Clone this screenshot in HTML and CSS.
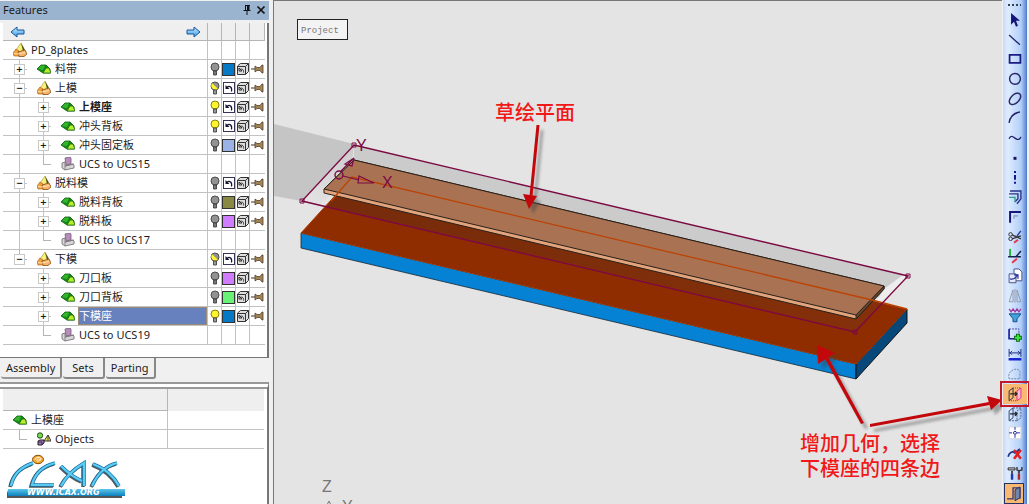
FILE: index.html
```html
<!DOCTYPE html>
<html lang="zh-CN">
<head>
<meta charset="utf-8">
<title>PD_8plates</title>
<link rel="stylesheet" href="styles.css">
</head>
<body>
<svg class="defs" aria-hidden="true">
  <symbol id="asm" viewBox="0 0 14 14"><path d="M3 7L8 0l3 6-4 3z" fill="#f8f078" stroke="#8a7a20" stroke-width=".5"/><path d="M8 0l4 7-2 1z" fill="#4f5216"/><path d="M0 10l3-4 3 2 2 5H1z" fill="#f2a13c" stroke="#b0641a" stroke-width=".7"/><path d="M5 9l7-2 2 4-3 2.500H6z" fill="#f6b568" stroke="#8a4a10" stroke-width=".8"/><path d="M1 10.500l4 .5 7-1.500" fill="none" stroke="#ffe3b0"/></symbol>
  <symbol id="part" viewBox="0 0 14 14"><path d="M0 7l4-4h5l4 4v4H6z" fill="#128a16" stroke="#0a5a0c" stroke-width=".8"/><path d="M1 7l3-3.500h4L6 8z" fill="#35b52c"/><path d="M6 11l3-5h3l2 5z" fill="#b6f02c" stroke="#1d6a10" stroke-width=".8"/></symbol>
  <symbol id="ucs" viewBox="0 0 14 14"><path d="M4 1l5-1 1 1v6l-5 1z" fill="#b58fb8" stroke="#76587c" stroke-width=".8"/><path d="M1 6l3-1v4l8-2 1 1v3l-9 2-3-2z" fill="#d9d5da" stroke="#777" stroke-width=".9"/><path d="M4 9v4M4 9l9-2" stroke="#777" stroke-width=".8"/></symbol>
  <symbol id="objs" viewBox="0 0 14 14"><circle cx="3" cy="3.500" r="2.700" fill="#78d94c" stroke="#234d1c"/><path d="M7 9l4-6 3 6z" fill="#eadf55" stroke="#333"/><path d="M11 3v6" stroke="#333" stroke-width=".8"/><path d="M1 9l2-1h4v3l-2 2H1z" fill="#a974c4" stroke="#222"/><path d="M1 10h4v3" fill="none" stroke="#222" stroke-width=".8"/></symbol>
  <symbol id="off" viewBox="0 0 14 14"><circle cx="7" cy="5" r="4" fill="#929292" stroke="#4d4d4d"/><path d="M5.500 9v4h3V9z" fill="#777" stroke="#333" stroke-width=".8"/></symbol>
  <symbol id="on" viewBox="0 0 14 14"><circle cx="7" cy="5" r="4" fill="#fff52b" stroke="#8a8115"/><path d="M5.500 9v4h3V9z" fill="#9a9a9a" stroke="#333" stroke-width=".8"/></symbol>
  <symbol id="half" viewBox="0 0 14 14"><circle cx="7" cy="5" r="4" fill="#929292" stroke="#4d4d4d"/><path d="M4.200 2.200l5.600 5.600A4 4 0 0 1 4.200 2.200" fill="#fff52b"/><path d="M5.500 9v4h3V9z" fill="#9a9a9a" stroke="#333" stroke-width=".8"/></symbol>
  <symbol id="inh" viewBox="0 0 14 14"><rect x="1.500" y="1.500" width="11" height="11" fill="#fff" stroke="#383456"/><path d="M3.500 4v4h4z" fill="#151532"/><path d="M5 6.500c2-2 5.500-1 4.500 4" fill="none" stroke="#151532" stroke-width="1.200"/></symbol>
  <symbol id="box" viewBox="0 0 14 14"><path d="M1.500 4l3-2.500h8v8l-3 3h-8z" fill="#ddd" stroke="#333"/><path d="M1.500 4.500h8v8M9.500 4.500l3-3" fill="none" stroke="#333"/><path d="M3 6v3h3zM4 7.500c2-1 4 0 3.500 3" fill="none" stroke="#222" stroke-width=".9"/></symbol>
  <symbol id="tack" viewBox="0 0 14 14"><path d="M1 7h5" stroke="#3b3024"/><path d="M5 4l2 1.500h3L12 3h1v8h-1l-2-2.500H7L5 10z" fill="#a18358" stroke="#584027" stroke-width=".8"/></symbol>
  <linearGradient id="blue" x2="0" y2="1"><stop stop-color="#c5ecff"/><stop offset="1" stop-color="#3b9ae8"/></linearGradient>
</svg>
<main class="app">
  <aside class="side">
    <header class="title"><h1>Features</h1>
      <button class="plain" aria-label="Pin"><svg width="12" height="12"><path d="M4 1.500h5M4.500 1.500v5M8 1.500v5M2.500 6.500h7M6 7v4" fill="none" stroke="#111"/><path d="M7 1v6" stroke="#111" stroke-width="2"/></svg></button>
      <button class="plain" aria-label="Close"><svg width="12" height="12"><path d="M2.500 2.500l7 7m0-7l-7 7" stroke="#111" stroke-width="1.700"/></svg></button>
    </header>
    <section class="tree">
      <table>
        <colgroup><col><col class="c"><col class="c"><col class="c"><col class="c"></colgroup>
        <thead><tr><th><div class="nav"><button class="plain" aria-label="Back"><svg width="15" height="12"><path d="M1 6l6-5v3h7v4H7v3z" fill="url(#blue)" stroke="#16549c"/></svg></button><button class="plain" aria-label="Forward"><svg width="15" height="12"><path d="M14 6L8 1v3H1v4h7v3z" fill="url(#blue)" stroke="#16549c"/></svg></button></div></th><th></th><th></th><th></th><th></th></tr></thead>
        <tbody>
        <tr><td><div class="row"><svg><use href="#asm"/></svg><span>PD_8plates</span></div></td><td></td><td></td><td></td><td></td></tr>
        <tr><td><div class="row"><i class="g v"><button aria-label="Expand">+</button></i><svg><use href="#part"/></svg><span>料带</span></div></td><td><svg><use href="#off"/></svg></td><td><b class="sw blue"></b></td><td><svg><use href="#box"/></svg></td><td><svg><use href="#tack"/></svg></td></tr>
        <tr><td><div class="row"><i class="g v"><button aria-label="Collapse">−</button></i><svg><use href="#asm"/></svg><span>上模</span></div></td><td><svg><use href="#half"/></svg></td><td><svg><use href="#inh"/></svg></td><td><svg><use href="#box"/></svg></td><td><svg><use href="#tack"/></svg></td></tr>
        <tr><td><div class="row"><i class="g pass"></i><i class="g v"><button aria-label="Expand">+</button></i><svg><use href="#part"/></svg><span class="bold">上模座</span></div></td><td><svg><use href="#on"/></svg></td><td><svg><use href="#inh"/></svg></td><td><svg><use href="#box"/></svg></td><td><svg><use href="#tack"/></svg></td></tr>
        <tr><td><div class="row"><i class="g pass"></i><i class="g v"><button aria-label="Expand">+</button></i><svg><use href="#part"/></svg><span>冲头背板</span></div></td><td><svg><use href="#on"/></svg></td><td><svg><use href="#inh"/></svg></td><td><svg><use href="#box"/></svg></td><td><svg><use href="#tack"/></svg></td></tr>
        <tr><td><div class="row"><i class="g pass"></i><i class="g v"><button aria-label="Expand">+</button></i><svg><use href="#part"/></svg><span>冲头固定板</span></div></td><td><svg><use href="#off"/></svg></td><td><b class="sw pale"></b></td><td><svg><use href="#box"/></svg></td><td><svg><use href="#tack"/></svg></td></tr>
        <tr><td><div class="row"><i class="g pass"></i><i class="g end"></i><svg><use href="#ucs"/></svg><span>UCS to UCS15</span></div></td><td></td><td></td><td></td><td></td></tr>
        <tr><td><div class="row"><i class="g v"><button aria-label="Collapse">−</button></i><svg><use href="#asm"/></svg><span>脱料模</span></div></td><td><svg><use href="#off"/></svg></td><td><svg><use href="#inh"/></svg></td><td><svg><use href="#box"/></svg></td><td><svg><use href="#tack"/></svg></td></tr>
        <tr><td><div class="row"><i class="g pass"></i><i class="g v"><button aria-label="Expand">+</button></i><svg><use href="#part"/></svg><span>脱料背板</span></div></td><td><svg><use href="#off"/></svg></td><td><b class="sw olive"></b></td><td><svg><use href="#box"/></svg></td><td><svg><use href="#tack"/></svg></td></tr>
        <tr><td><div class="row"><i class="g pass"></i><i class="g v"><button aria-label="Expand">+</button></i><svg><use href="#part"/></svg><span>脱料板</span></div></td><td><svg><use href="#off"/></svg></td><td><b class="sw violet"></b></td><td><svg><use href="#box"/></svg></td><td><svg><use href="#tack"/></svg></td></tr>
        <tr><td><div class="row"><i class="g pass"></i><i class="g end"></i><svg><use href="#ucs"/></svg><span>UCS to UCS17</span></div></td><td></td><td></td><td></td><td></td></tr>
        <tr><td><div class="row"><i class="g end"><button aria-label="Collapse">−</button></i><svg><use href="#asm"/></svg><span>下模</span></div></td><td><svg><use href="#half"/></svg></td><td><svg><use href="#inh"/></svg></td><td><svg><use href="#box"/></svg></td><td><svg><use href="#tack"/></svg></td></tr>
        <tr><td><div class="row"><i class="g"></i><i class="g v"><button aria-label="Expand">+</button></i><svg><use href="#part"/></svg><span>刀口板</span></div></td><td><svg><use href="#off"/></svg></td><td><b class="sw violet"></b></td><td><svg><use href="#box"/></svg></td><td><svg><use href="#tack"/></svg></td></tr>
        <tr><td><div class="row"><i class="g"></i><i class="g v"><button aria-label="Expand">+</button></i><svg><use href="#part"/></svg><span>刀口背板</span></div></td><td><svg><use href="#off"/></svg></td><td><b class="sw green"></b></td><td><svg><use href="#box"/></svg></td><td><svg><use href="#tack"/></svg></td></tr>
        <tr><td><div class="row"><i class="g"></i><i class="g v"><button aria-label="Expand">+</button></i><svg><use href="#part"/></svg><span class="sel">下模座</span></div></td><td><svg><use href="#on"/></svg></td><td><b class="sw blue"></b></td><td><svg><use href="#box"/></svg></td><td><svg><use href="#tack"/></svg></td></tr>
        <tr><td><div class="row"><i class="g"></i><i class="g end"></i><svg><use href="#ucs"/></svg><span>UCS to UCS19</span></div></td><td></td><td></td><td></td><td></td></tr>
        </tbody>
      </table>
    </section>
    <nav class="tabs"><button class="active">Assembly</button><button>Sets</button><button>Parting</button></nav>
    <section class="detail">
      <table>
        <colgroup><col class="name"><col></colgroup>
        <thead><tr><th></th><th></th></tr></thead>
        <tbody>
        <tr><td><div class="row"><svg><use href="#part"/></svg><span>上模座</span></div></td><td></td></tr>
        <tr><td><div class="row"><i class="g end"></i><svg><use href="#objs"/></svg><span>Objects</span></div></td><td></td></tr>
        </tbody>
      </table>
      <svg class="logo" width="122" height="48" viewBox="5 451 122 48">
        <defs><g id="mark" fill="none"><path d="M11 486C13 475 21 467 33 463"/><path d="M55 463C43 466 35 473 32 485h22"/><path d="M61 486C65 478 74 469 84 463v23M61 466c8 8 14 12 21 15"/><path d="M93 464c11 4 20 11 26 22M117 463c-12 3-20 12-25 23"/></g>
        <linearGradient id="bar" x2="0" y2="1"><stop stop-color="#5cc5ea"/><stop offset="1" stop-color="#0b7fbd"/></linearGradient></defs>
        <g transform="translate(-1 1)"><use href="#mark" stroke="#555" stroke-width="3.500"/></g>
        <use href="#mark" stroke="#1674a8" stroke-width="3.600"/><use href="#mark" stroke="#5ccbf2" stroke-width="2.200"/>
        <ellipse cx="38" cy="459.500" rx="5.500" ry="4.200" fill="#f3a52c" stroke="#8a5010"/><path d="M35 460c0-3 6-4 6-1 0 2-5 3-4 1 1-2 3-1 3 0" fill="none" stroke="#fff" stroke-width=".9"/>
        <path d="M7 490v8h115v-2H9z" fill="#555"/><path d="M8 489h117v7H8z" fill="url(#bar)"/>
        <text x="27" y="495" class="url">WWW.ICAX.ORG</text>
      </svg>
    </section>
  </aside>
  <div class="split"></div>
  <section class="view">
    <svg class="scene" viewBox="274 0 728 504" preserveAspectRatio="xMinYMin meet">
      <defs>
        <linearGradient id="pl" x1="302" y1="200" x2="354" y2="145" gradientUnits="userSpaceOnUse"><stop stop-color="#e4e4e4"/><stop offset="1" stop-color="#cbcbcb"/></linearGradient>
        <linearGradient id="sh" x1="300" x2="856" gradientUnits="userSpaceOnUse"><stop stop-color="#762b0a"/><stop offset="1" stop-color="#84300a"/></linearGradient>
        <filter id="soft" x="-30%" y="-30%" width="160%" height="160%"><feGaussianBlur stdDeviation="1.500"/></filter>
        <g id="arrows"><path d="M536.500 125h3l-7 71h-3z"/><path d="M523 194l14 2-8 13z"/><path d="M864 423l-3 1-37-67 3-2z"/><path d="M817 345l18 8-17 11z"/><path d="M870 427v-3l119-22 1 3z"/><path d="M1002 400l-15-4 4 14z"/></g>
      </defs>
      <path d="M274 124l80 20-52 57-28-5z" fill="#c5c5c5"/>
      <path d="M354 145L302 201 318 205 338 190 352 164z" fill="url(#pl)"/>
      <path d="M354 145L903 275 880 298 354 170z" fill="#cbcbcb"/>
      <path d="M903 275l5 1-36 38-2-2 14-23z" fill="#ededed"/>
      <path d="M301 233L352 177 907 309 856 364z" fill="#8f2c00"/>
      <path d="M327 206L352 177 880 303 857 331z" fill="url(#sh)"/>
      <path d="M301 233L856 364V379L301 248z" fill="#0582d4" stroke="#102536" stroke-width=".8"/>
      <path d="M856 364L907 309V323L856 379z" fill="#07477a" stroke="#111"/>
      <path d="M352 177L301 233 856 364 907 309" fill="none" stroke="#b33c00"/>
      <path d="M354 160L324 189V193L856 319 884 289V286z" fill="#e2a47c" stroke="#29201a"/>
      <path d="M856 315L884 286V289L856 319z" fill="#69462e" stroke="#29201a"/>
      <path d="M354 160L324 189 856 315 884 286z" fill="#a97353" stroke="#29201a"/>
      <path d="M331 201L352 177 872 300 907 309" fill="none" stroke="#bc4305" stroke-width="1.300"/>
      <g fill="none" stroke="#7b0a43" stroke-width="1.400"><path d="M354 145L908 276 855 332 302 201z"/><path d="M352 143h4v4h-4zM906 274h4v4h-4zM853 330h4v4h-4zM300 199h4v4h-4z" stroke-width="1"/><circle cx="339" cy="175" r="4"/><path d="M343 176l16 4M359 176l15 7h-16zM341 171l13-13-9 6 7 2 2-8" stroke-width="1.200"/></g>
      <text x="382" y="188" class="axis">X</text><text x="356" y="151" class="axis">Y</text>
      <text x="322" y="492" class="axis dim">Z</text><text x="342" y="512" class="axis dim">Y</text><path d="M326 507l3-6 3 6z" fill="none" stroke="#777"/>
      <g class="label"><rect x="297.500" y="19.500" width="50" height="20"/><text x="301" y="33">Project</text></g>
      <g transform="translate(4 5)" opacity=".45" filter="url(#soft)"><use href="#arrows" fill="#444"/></g>
      <use href="#arrows" fill="#c3080c"/>
      <g class="note"><text x="495" y="120">草绘平面</text><text><tspan x="800" y="451">增加几何，选择</tspan><tspan x="800" y="476">下模座的四条边</tspan></text></g>
    </svg>
  </section>
  <nav class="tools" aria-label="Sketch tools">
    <div class="grip"></div>
    <button aria-label="Select"><svg viewBox="0 0 24 20"><path d="M8 3v12l3-3 2 5 2-1-2-5h4z" fill="#15157c"/></svg></button>
    <button aria-label="Line"><svg viewBox="0 0 24 20"><path d="M6 5l11 10" stroke="#22226e" stroke-width="1.300"/></svg></button>
    <button aria-label="Rectangle"><svg viewBox="0 0 24 20"><path d="M6.500 6h11v8h-11z" fill="none" stroke="#1b1b86" stroke-width="1.800"/></svg></button>
    <button aria-label="Circle"><svg viewBox="0 0 24 20"><circle cx="12" cy="10" r="5.500" fill="none" stroke="#29296c" stroke-width="1.500"/></svg></button>
    <button aria-label="Ellipse"><svg viewBox="0 0 24 20"><ellipse cx="12" cy="10" rx="7" ry="4.200" transform="rotate(-45 12 10)" fill="none" stroke="#29296c" stroke-width="1.500"/></svg></button>
    <button aria-label="Arc"><svg viewBox="0 0 24 20"><path d="M6 15C7 9 11 5 17 4" fill="none" stroke="#22226e" stroke-width="1.500"/></svg></button>
    <button aria-label="Spline"><svg viewBox="0 0 24 20"><path d="M6 11c2-5 5-1 7 0s4 1 5-2" fill="none" stroke="#22226e" stroke-width="1.400"/></svg></button>
    <button aria-label="Point"><svg viewBox="0 0 24 20"><path d="M10.500 9h3v3h-3z" fill="#15155e"/></svg></button>
    <button aria-label="Centre line"><svg viewBox="0 0 24 20"><path d="M12 3v14" stroke="#15158c" stroke-width="2" stroke-dasharray="2 2 5 2"/></svg></button>
    <button aria-label="Offset"><svg viewBox="0 0 24 20"><path d="M7 4h11v8l-4 5M6 7h9v5l-3 3" fill="none" stroke="#293389" stroke-width="1.400"/><path d="M6 10.500h6v5" fill="none" stroke="#2c9b8e" stroke-width="1.300"/></svg></button>
    <button aria-label="Corner"><svg viewBox="0 0 24 20"><path d="M7 16V5h11" fill="none" stroke="#15157a" stroke-width="2"/><path d="M11 12V9h4" fill="none" stroke="#8795ba" stroke-width="1.300"/></svg></button>
    <button aria-label="Trim"><svg viewBox="0 0 24 20"><g fill="none" stroke="#333"><circle cx="7.500" cy="7.500" r="1.800"/><circle cx="7.500" cy="12" r="1.800"/><path d="M9 8l9 4M9 12l9-3" stroke-width="1.300"/></g><path d="M14 9l4-5" stroke="#2333a8" stroke-width="1.400"/><path d="M11 16l4-3" stroke="#e93347" stroke-width="2"/></svg></button>
    <button aria-label="Extend"><svg viewBox="0 0 24 20"><path d="M7 3v8" stroke="#23b63c" stroke-width="2"/><path d="M5 11h13M13 11l5-6" stroke="#172248" stroke-width="1.500"/><path d="M9 17l5-4" stroke="#e93347" stroke-width="2"/></svg></button>
    <button aria-label="Copy"><svg viewBox="0 0 24 20"><path d="M11 3h5l3 3v9h-8z" fill="#fff" stroke="#48538b"/><path d="M6 8h7v9H6z" fill="#e7e9fa" stroke="#48538b"/><path d="M7 13c4 1 6-1 7-4M11 9h4v4" fill="none" stroke="#24319b" stroke-width="1.300"/></svg></button>
    <button aria-label="Mirror" disabled><svg viewBox="0 0 24 20"><path d="M10 4v12H6zM14 4v12h4zM12 3v14" fill="none" stroke="#929bad"/></svg></button>
    <button aria-label="Filter"><svg viewBox="0 0 24 20"><path d="M6 9h12l-4 5v3h-4v-3z" fill="#42a5d8" stroke="#194a92"/><path d="M6 4l2 3 2-3 2 3 2-3 2 3 2-3" fill="none" stroke="#a03c9e" stroke-width="1.300"/></svg></button>
    <button aria-label="Add region"><svg viewBox="0 0 24 20"><path d="M6 4h10v10H6z" fill="none" stroke="#574daa" stroke-dasharray="2 1"/><path d="M6 4v10h8" fill="none" stroke="#25259a" stroke-width="1.700"/><path d="M15 9v8M11 13h8" stroke="#116b17" stroke-width="4"/><path d="M15 10v6M12 13h6" stroke="#3de545" stroke-width="2"/></svg></button>
    <button aria-label="Dimension"><svg viewBox="0 0 24 20"><path d="M6 4v8M18 4v8M6 8h12M9 6L7 8l2 2M15 6l2 2-2 2" fill="none" stroke="#213284"/><path d="M5.500 14.500h13" stroke="#1523d0" stroke-width="2.500"/></svg></button>
    <button aria-label="Profile" disabled><svg viewBox="0 0 24 20"><path d="M6 15c-1-4 0-7 4-9 4-2 8 0 7 4v5z" fill="none" stroke="#7587a5" stroke-dasharray="2 1"/></svg></button>
    <button class="hot" aria-label="Add geometry"><svg viewBox="0 0 24 20"><path d="M6 7l4-3v10l-4 3z" fill="none" stroke="#343238"/><path d="M14 7l4-3v10l-4 3z" fill="#f8bfd0" stroke="#df3388"/><path d="M7 10h7M12 8l2 2-2 2" fill="none" stroke="#222" stroke-width="1.300"/><path d="M10 4h8M6 17h8" stroke="#655" stroke-dasharray="1 1"/></svg></button>
    <button aria-label="Project geometry"><svg viewBox="0 0 24 20"><path d="M6 7l4-3v10l-4 3z" fill="none" stroke="#34456d"/><path d="M14 7l4-3v10l-4 3zM10 4h8M6 17h8" fill="none" stroke="#54658d" stroke-dasharray="2 1"/><path d="M7 10h7M12 8l2 2-2 2" fill="none" stroke="#222" stroke-width="1.300"/></svg></button>
    <button aria-label="Centre"><svg viewBox="0 0 24 20"><path d="M6 4h12v12H6z" fill="#fff" stroke="#d0d5e0"/><path d="M12 4v12M6 10h12" stroke="#252e98" stroke-dasharray="3 1"/><circle cx="12" cy="10" r="1.500" fill="#fff" stroke="#252e98"/></svg></button>
    <button aria-label="Delete curve"><svg viewBox="0 0 24 20"><path d="M5 14c1-5 5-6 7-4l5-4" fill="none" stroke="#223283" stroke-width="1.800"/><path d="M11 7l7 9M18 7l-7 9" stroke="#df2020" stroke-width="2.500"/></svg></button>
    <button aria-label="Settings"><svg viewBox="0 0 24 20"><path d="M5 5h7v2H5z" fill="#eee" stroke="#222"/><path d="M9 8v3" stroke="#444" stroke-width="2"/><path d="M9 11v6" stroke="#1b39ad" stroke-width="2.500"/><path d="M14 4v3l2 1 3-1V4" fill="none" stroke="#333" stroke-width="1.400"/><path d="M16 8v3" stroke="#444" stroke-width="2"/><path d="M16 11v6" stroke="#b32929" stroke-width="2.500"/></svg></button>
    <button class="exit" aria-label="Exit"><svg viewBox="0 0 24 20"><path d="M4 15h6V4h7v11" fill="none" stroke="#2c3775" stroke-width="1.300"/><path d="M12 6l5-3v11l-5 3z" fill="#7185ae" stroke="#253264"/></svg></button>
  </nav>
</main>
</body>
</html>
```
FILE: styles.css
```css
* { box-sizing: border-box; }
body { margin: 0; background: #f0f0f0; color: #1c1c1c; font: 11px/16px "Noto Sans", "Noto Sans CJK SC", sans-serif; }
button { padding: 0; border: 0; background: none; color: inherit; font: inherit; }
svg { display: block; }
.defs { position: absolute; width: 0; height: 0; }
.app { display: grid; grid-template-columns: 269px 5px minmax(0, 1fr) 27px; height: 100vh; overflow: hidden; }
.side { display: flex; flex-direction: column; min-width: 0; min-height: 0; padding-top: 1px; }
.title { display: flex; align-items: center; gap: 2px; height: 19px; padding: 0 2px 1px 3px; background: #9ab4d0; flex: none; }
.title h1 { flex: 1; margin: 0; font-size: 11px; font-weight: 400; }
.tree { flex: none; margin-top: 3px; padding: 0 2px 12px 3px; background: #fff; border-right: 2px solid #777; border-bottom: 1px solid #777; }
table { width: 100%; table-layout: fixed; border-collapse: separate; border-spacing: 0; }
.c { width: 14px; }
.c:last-child { width: 15px; }
th { height: 18px; padding: 0; background: #efefef; border-right: 1px solid #b5b5b5; border-bottom: 1px solid #b5b5b5; }
td { height: 19px; padding: 0; border-right: 1px solid #c2c2c2; border-bottom: 1px solid #c2c2c2; }
td:last-child { border-right: 0; }
td > svg { width: 14px; height: 14px; }
.nav { display: flex; justify-content: space-between; padding: 0 6px 0 7px; }
.row { display: flex; align-items: center; height: 18px; padding-left: 4px; white-space: nowrap; }
.row svg { flex: none; width: 14px; height: 14px; margin: 0 3px 0 6px; }
.row span { flex: 1; padding-left: 1px; line-height: 18px; }
.row .bold { font-weight: 700; }
.row .sel { color: #fff; background: #6681bd; border: 1px solid #9a8a78; padding-left: 0; line-height: 16px; }
.g { display: flex; flex: none; align-items: center; justify-content: center; width: 24px; height: 19px; font-style: normal; }
.v { background: linear-gradient(#c4c4c4, #c4c4c4) 12px 0 / 1px 100% no-repeat, linear-gradient(#c4c4c4, #c4c4c4) 12px 9px / 8px 1px no-repeat; }
.pass { background: linear-gradient(#c4c4c4, #c4c4c4) 12px 0 / 1px 100% no-repeat; }
.end { background: linear-gradient(#b4b4b4, #b4b4b4) 12px 0 / 1px 9px no-repeat, linear-gradient(#b4b4b4, #b4b4b4) 12px 9px / 8px 1px no-repeat; }
.g button { width: 11px; height: 11px; margin-left: 1px; border: 1px solid #c8c8c8; background: #fff; font-size: 11px; font-weight: 600; line-height: 8px; text-align: center; }
.sw { display: block; width: 13px; height: 13px; border: 1px solid #333; }
.blue { background: #0679c6; }
.pale { background: #9bb2e6; }
.olive { background: #898944; }
.violet { background: #d07cff; }
.green { background: #68f276; }
.tabs { display: flex; flex: none; gap: 1px; height: 24px; padding: 0 0 3px 1px; }
.tabs button { padding: 0 5px; border: 1px solid #888; border-width: 0 2px 2px 0; border-radius: 0 0 3px 3px; }
.tabs button:nth-child(2) { padding: 0 9px; }
.tabs .active { border-bottom-color: #999; }
.detail { flex: 1; min-height: 0; padding: 0 3px; background: #fff; border-right: 2px solid #777; border-top: 7px double #999; }
.name { width: 165px; }
.detail th { background: #efefef; height: 22px; }
.detail th:last-child { border: 0; }
.logo { margin: 2px 0 0 2px; }
.url { font: italic bold 8px "DejaVu Sans", sans-serif; fill: #fff; }
.split { border-right: 1px solid #777; background: #f0f0f0; }
.view { min-width: 0; background: #e4e4e4; border-top: 1px solid #777; overflow: hidden; }
.scene { width: 100%; height: auto; margin-top: -1px; }
.axis { font: 16px "Liberation Sans", sans-serif; fill: #7b0a43; }
.dim { fill: #777; }
.label rect { fill: #f3f3f3; stroke: #222; }
.label text { font: 9px "Liberation Mono", monospace; fill: #777; }
.note { font: 500 20px "Noto Sans CJK SC", sans-serif; fill: #f01818; }
.tools { display: flex; flex-direction: column; min-height: 0; margin: 0 2px 0 1px; background: linear-gradient(90deg, #c5dafa, #dfecff 20%, #b2cff8 75%, #789ee0 90%, #4f78ca); }
.grip { flex: none; width: 13px; height: 2px; margin: 4px 0 4px 5px; background: repeating-linear-gradient(90deg, #345 0 2px, transparent 2px 4px); }
.tools button { flex: 1; min-height: 0; }
.tools svg { width: 24px; height: 100%; }
.hot { outline: 2px solid #c3182c; outline-offset: 1px; background: #f9b873; }
.tools .exit { margin: 0 3px 0 1px; border: 1px solid #253264; background: #f9b873; }
.exit svg { margin-left: -2px; }
```
